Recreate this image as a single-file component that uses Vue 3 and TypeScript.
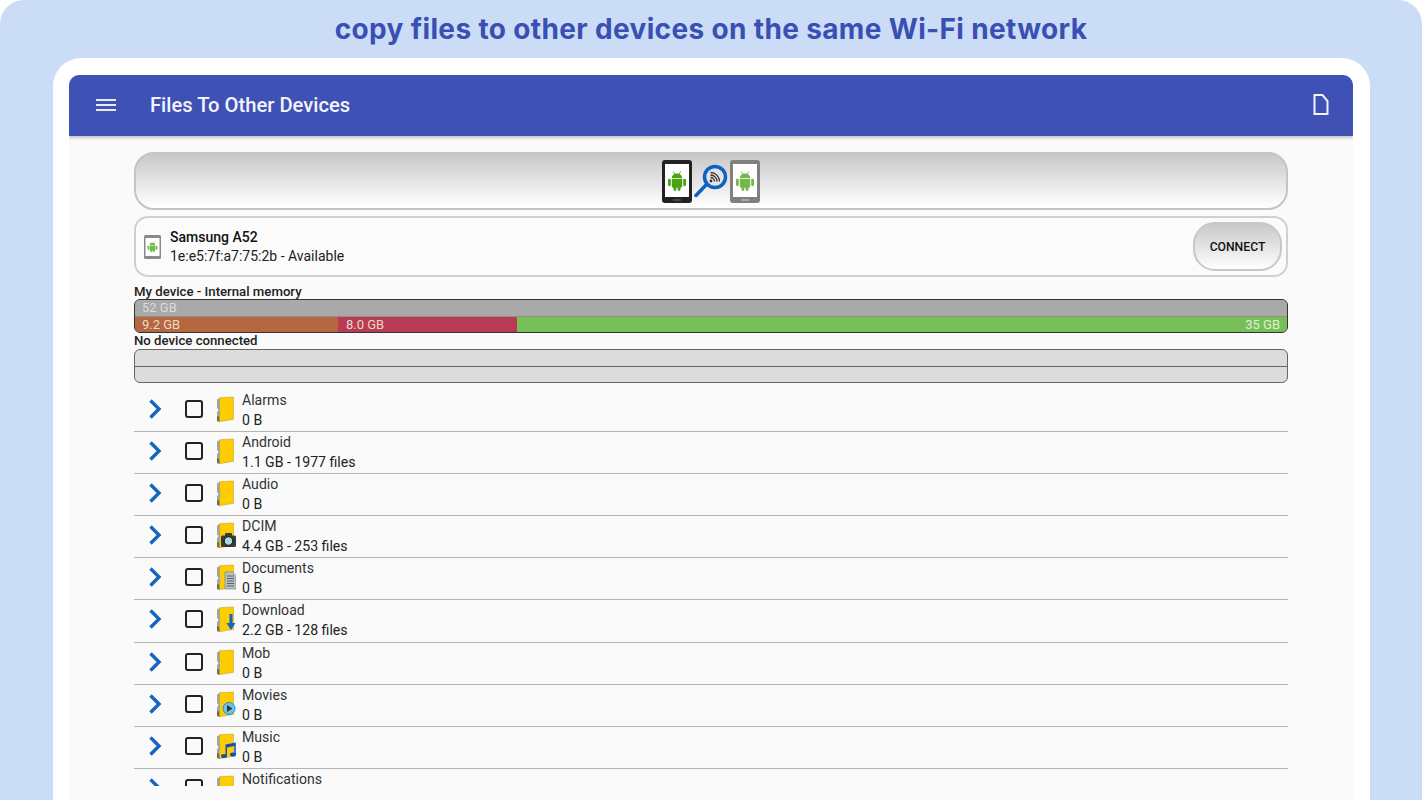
<script setup lang="ts">
interface Folder { name: string; info: string; badge?: string }

const folders: Folder[] = [
  { name: "Alarms", info: "0 B" },
  { name: "Android", info: "1.1 GB - 1977 files" },
  { name: "Audio", info: "0 B" },
  { name: "DCIM", info: "4.4 GB - 253 files", badge: "camera" },
  { name: "Documents", info: "0 B", badge: "doc" },
  { name: "Download", info: "2.2 GB - 128 files", badge: "down" },
  { name: "Mob", info: "0 B" },
  { name: "Movies", info: "0 B", badge: "play" },
  { name: "Music", info: "0 B", badge: "music" },
  // last row is cut off by the list, only its name shows
  { name: "Notifications", info: "" },
];
</script>

<template>
  <div class="page">
    <h1 class="headline">copy files to other devices on the same Wi-Fi network</h1>
    <div class="frame">
      <div class="app">
        <header class="bar">
          <svg class="menu" width="20" height="14" viewBox="0 0 20 14">
            <path d="M0 2h20M0 7h20M0 12h20" stroke="#e8eaf6" stroke-width="2" />
          </svg>
          <span class="bar__title">Files To Other Devices</span>
          <svg class="bar__file" width="16" height="21" viewBox="0 0 16 21">
            <path d="M1.500 1h8l5 6v13h-13z" fill="none" stroke="#f2f3fa" stroke-width="2" />
          </svg>
        </header>

        <svg width="0" height="0" class="defs">
          <defs>
            <symbol id="droid" viewBox="0 0 20 21">
              <path d="M4.500 7.500a5.500 5 0 0 1 11 0z" />
              <path d="M4.500 8.500h11v7.500a1.500 1.500 0 0 1-1.500 1.500H6a1.500 1.500 0 0 1-1.500-1.500z" />
              <rect x="0.500" y="8" width="3" height="8" rx="1.500" />
              <rect x="16.500" y="8" width="3" height="8" rx="1.500" />
              <rect x="6.300" y="16" width="3" height="5" rx="1.500" />
              <rect x="10.700" y="16" width="3" height="5" rx="1.500" />
              <path d="M6 .5l2 3M14 .5l-2 3" stroke-width="1" stroke="currentColor" />
            </symbol>
          </defs>
        </svg>

        <main class="content">
          <div class="banner">
            <svg class="tablet" width="30" height="43" viewBox="0 0 30 43">
              <rect width="30" height="43" rx="3" fill="#222" />
              <rect x="3" y="4" width="24" height="33" fill="#fff" />
              <path d="M11 40h8" stroke="#666" />
              <use href="#droid" x="5.500" y="11" width="19" height="20" fill="#4aa312" color="#4aa312" />
            </svg>
            <svg class="glass" width="34" height="34" viewBox="0 0 34 34">
              <path d="M2 31.500 12 21" stroke="#0d62c4" stroke-width="3.500" stroke-linecap="round" />
              <circle cx="21" cy="13" r="10.500" fill="#e4e4e4" stroke="#0d62c4" stroke-width="3.500" />
              <circle cx="17" cy="17" r="1.400" fill="#333" />
              <path d="M16.500 13.500a4 4 0 0 1 4 4M16.500 11a6.500 6.500 0 0 1 6.500 6.500M16.500 8.500a9 9 0 0 1 9 9" fill="none" stroke="#333" stroke-width="1.300" />
            </svg>
            <svg class="tablet" width="30" height="43" viewBox="0 0 30 43">
              <rect width="30" height="43" rx="3" fill="#808080" />
              <rect x="3" y="4" width="24" height="33" fill="#fff" />
              <path d="M11 40h8" stroke="#ccc" />
              <use href="#droid" x="5.500" y="11" width="19" height="20" fill="#74b74a" color="#74b74a" />
            </svg>
          </div>

          <div class="peer">
            <svg class="peer__icon" width="17" height="24" viewBox="0 0 17 24">
              <rect width="17" height="24" rx="1.500" fill="#8a8a8a" />
              <rect x="1.500" y="3" width="14" height="18" fill="#fff" />
              <use href="#droid" x="3" y="6.500" width="11" height="11" fill="#74b74a" color="#74b74a" />
            </svg>
            <div class="peer__text">
              <div class="peer__name">Samsung A52</div>
              <div class="peer__mac">1e:e5:7f:a7:75:2b - Available</div>
            </div>
            <button class="connect">CONNECT</button>
          </div>

          <div class="store__label">My device - Internal memory</div>
          <div class="store">
            <div class="store__row total"><span>52 GB</span></div>
            <div class="store__row split">
              <span class="seg seg--apps">9.2 GB</span>
              <span class="seg seg--other">8.0 GB</span>
              <span class="seg seg--free">35 GB</span>
            </div>
          </div>
          <div class="store__label store__label--next">No device connected</div>
          <div class="store store--empty">
            <div class="store__row"></div>
            <div class="store__row"></div>
          </div>

          <ul class="list">
            <li v-for="f in folders" :key="f.name" class="row">
              <svg class="chev" width="14" height="20" viewBox="0 0 14 20">
                <path d="M2.500 1.500 11 10 2.500 18.500" fill="none" stroke="#1565c0" stroke-width="3.400" />
              </svg>
              <span class="check"></span>
              <svg class="folder" width="20" height="26" viewBox="0 0 20 26">
                <path d="M1 3.500 4 1.700V25.700L1 25v-8.500l1.500-2.500L1 12z" fill="#9aa6a8" />
                <path d="M1 20v5l3 .7V21z" fill="#6f6a50" />
                <path d="M3.500 1.700 17.500 1v22.300L3.500 25.700v-9l1.500-2.700-1.500-2.500z" fill="#ffcc00" stroke="#b59a2e" stroke-width=".5" />
                <g v-if="f.badge === 'camera'">
                  <rect x="5" y="13.500" width="15" height="11.500" rx="1.500" fill="#3a3a3a" />
                  <rect x="9" y="11" width="7" height="4" rx="1" fill="#3a3a3a" />
                  <circle cx="12.500" cy="19" r="4.300" fill="#a9d7e6" stroke="#111" />
                </g>
                <g v-if="f.badge === 'doc'">
                  <path d="M9 8h7.500L20 11.500V25H9z" fill="#b6c2c4" stroke="#778" stroke-width=".6" />
                  <path d="M11 12h7M11 14.500h7M11 17h7M11 19.500h7M11 22h7" stroke="#5b6468" stroke-width="1" />
                </g>
                <path v-if="f.badge === 'down'" d="M13.500 8h3v9h3L15 24l-4.500-7h3z" fill="#1565c0" />
                <g v-if="f.badge === 'play'">
                  <circle cx="13" cy="17.500" r="6" fill="#6cc4ea" stroke="#2a8fc0" />
                  <path d="M11 14 16.500 17.500 11 21z" fill="#333" />
                </g>
                <g v-if="f.badge === 'music'" fill="#1450b0">
                  <path d="M9.500 11.500 19.800 9.500v12h-1.500v-8.500l-7.300 1.400V23H9.500z" />
                  <ellipse cx="8" cy="23" rx="3" ry="2" />
                  <ellipse cx="17" cy="21.500" rx="3" ry="2" />
                </g>
              </svg>
              <div class="row__text">
                <div class="row__name">{{ f.name }}</div>
                <div class="row__info">{{ f.info }}</div>
              </div>
            </li>
          </ul>
        </main>
      </div>
    </div>
  </div>
</template>

<style>
html, body { background: #fff; }
body { overflow: hidden; }
</style>

<style scoped>
.page {
  height: 800px;
  overflow: hidden;
  background: #cbdcf6;
  border-radius: 24px 24px 0 0;
  display: flex;
  flex-direction: column;
  font-family: Roboto, "Liberation Sans", sans-serif;
}
.headline {
  margin: 0;
  height: 58px;
  flex: none;
  line-height: 59px;
  text-align: center;
  font-family: Inter, "Liberation Sans", sans-serif;
  font-size: 28px;
  font-weight: 700;
  letter-spacing: .35px;
  color: #3a4fb3;
}
.frame {
  flex: 1;
  margin: 0 52px 0 53px;
  padding: 17px 17px 0 16px;
  background: #fff;
  border-radius: 28px 28px 0 0;
  min-height: 0;
}
.app {
  height: 100%;
  background: #fafafa;
  border-radius: 10px 10px 0 0;
  overflow: hidden;
}
.bar {
  height: 61px;
  background: #3f51b5;
  display: flex;
  align-items: center;
  color: #fff;
  padding: 0 24px 0 27px;
  box-shadow: 0 2px 3px rgba(0, 0, 0, .22);
  position: relative;
}
.menu { margin-top: -1px; }
.bar__title { margin: -1px 0 0 34px; font-size: 20.200px; font-weight: 500; color: #f3f4fb; }
.bar__file { margin-left: auto; margin-top: -2px; }
.defs { position: absolute; }
.content { padding: 16px 65px 0 65px; }
.banner {
  height: 58px;
  box-sizing: border-box;
  border: 2px solid #c4c4c4;
  border-radius: 20px;
  background: linear-gradient(#c8c8c8, #f2f2f2 75%, #fff);
  display: flex;
  align-items: center;
  justify-content: center;
  gap: 2px;
}
.peer {
  margin-top: 6px;
  height: 61px;
  box-sizing: border-box;
  border: 2px solid #d0d0d0;
  border-radius: 14px;
  background: #fbfbfb;
  display: flex;
  align-items: center;
  padding: 0 4px 0 8px;
}
.peer__text { margin-left: 9px; font-size: 14px; line-height: 19px; color: #222; }
.peer__name { font-weight: 500; font-size: 14px; color: #111; }
.connect {
  margin-left: auto;
  width: 89px;
  height: 49px;
  box-sizing: border-box;
  border: 2px solid #c8c8c8;
  border-radius: 22px;
  background: linear-gradient(#c8c8c8, #f4f4f4 80%, #fff);
  font-family: inherit;
  font-size: 12.200px;
  font-weight: 500;
  color: #111;
  padding: 0;
}
.store__label {
  margin-top: 7px;
  height: 15px;
  line-height: 15px;
  font-size: 13.200px;
  font-weight: 500;
  color: #222;
}
.store__label--next { margin-top: 0; height: 16px; line-height: 16px; }
.store {
  height: 34px;
  box-sizing: border-box;
  border: 1px solid #333;
  border-radius: 6px;
  overflow: hidden;
  background: #a9a9a9;
  font-size: 13px;
}
.store__row { height: 16px; line-height: 16px; }
.total { background: #a9a9a9; color: #dcdcdc; padding-left: 7px; border-bottom: 1px solid #8f8f8f; }
.split { display: flex; height: 15px; }
.seg { display: block; color: #ecd9cc; padding-left: 7px; box-sizing: border-box; }
.seg--apps { width: 203px; background: #b5673f; }
.seg--other { width: 179px; background: #b93a52; padding-left: 8px; }
.seg--free { flex: 1; background: #76c057; color: #dff0d6; text-align: right; padding-right: 7px; }
.store--empty { background: #dcdcdc; border-color: #666; }
.store--empty .store__row:first-child { height: 16px; border-bottom: 1px solid #666; }
.list {
  list-style: none;
  margin: 7px 0 0;
  padding: 0;
  height: 396px;
  overflow: hidden;
}
.row {
  height: 41.100px;
  border-bottom: 1px solid #b4b4b4;
  display: flex;
  align-items: flex-start;
}
.chev { margin: 9px 0 0 14px; flex: none; }
.check {
  margin: 10px 0 0 23px;
  width: 18px;
  height: 18px;
  box-sizing: border-box;
  border: 2px solid #222;
  border-radius: 3px;
  flex: none;
}
.folder { margin: 6px 0 0 13px; flex: none; }
.row__text { margin-left: 5px; padding-left: 1px; font-size: 14.100px; line-height: 19px; padding-top: 1px; color: #222; }
.row__name { color: #333; }
.row__info { margin-top: 1px; }
</style>
